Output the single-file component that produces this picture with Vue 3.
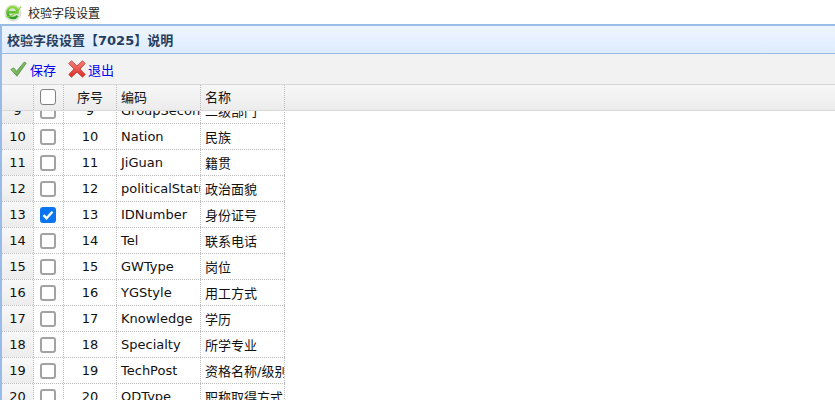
<script setup>
const rows = [
  [9, 'GroupSecond', '二级部门'],
  [10, 'Nation', '民族'],
  [11, 'JiGuan', '籍贯'],
  [12, 'politicalStatus', '政治面貌'],
  [13, 'IDNumber', '身份证号', true],
  [14, 'Tel', '联系电话'],
  [15, 'GWType', '岗位'],
  [16, 'YGStyle', '用工方式'],
  [17, 'Knowledge', '学历'],
  [18, 'Specialty', '所学专业'],
  [19, 'TechPost', '资格名称/级别'],
  [20, 'QDType', '职称取得方式'],
]
</script>

<template>
  <div class="page">
    <div class="titlebar">
      <svg class="logo" width="19" height="19" viewBox="0 0 19 19">
        <defs>
          <linearGradient id="eg" x1="0" y1="0" x2="0" y2="1">
            <stop offset="0" stop-color="#8fdc3c" />
            <stop offset="1" stop-color="#2f9e2a" />
          </linearGradient>
        </defs>
        <circle cx="9" cy="10" r="8.500" fill="#dce3d6" />
        <path d="M4.800 9.200h8.600c.1-3-2-5.200-4.700-5.200-3 0-5.200 2.400-5.200 5.400 0 3.200 2.200 5.600 5.300 5.600 2 0 3.600-.7 4.700-2.200" fill="none" stroke="url(#eg)" stroke-width="2.600" />
        <path d="M2 13.500C6 15 13 10 17 3.500" fill="none" stroke="#7fd034" stroke-width="1.200" />
      </svg>
      <span>校验字段设置</span>
    </div>
    <div class="panel">
      <div class="panel-head">校验字段设置【7025】说明</div>
      <div class="toolbar">
        <a class="tool">
          <svg width="17" height="18" viewBox="0 0 17 18">
            <defs>
              <linearGradient id="ck" x1="0" y1="0" x2="1" y2="1">
                <stop offset="0" stop-color="#a6dc78" />
                <stop offset="1" stop-color="#4f9a3e" />
              </linearGradient>
            </defs>
            <path d="M.8 9.500l2.900-1.700 2.700 3.500L14.300 2l1.900 1.200L7 16.200z" fill="url(#ck)" stroke="#5a8f52" stroke-width=".8" stroke-linejoin="round" />
          </svg>
          <span>保存</span>
        </a>
        <a class="tool">
          <svg width="18" height="18" viewBox="0 0 18 18">
            <defs>
              <linearGradient id="xk" x1="0" y1="0" x2="0" y2="1">
                <stop offset="0" stop-color="#f7857a" />
                <stop offset="1" stop-color="#dc2a26" />
              </linearGradient>
            </defs>
            <path d="M.8 3.500L3.500.8 9 6 14.500.8l2.700 2.700L12 9l5.200 5.500-2.700 2.700L9 12l-5.500 5.200-2.700-2.700L6 9z" fill="url(#xk)" stroke="#b9322e" stroke-width=".8" stroke-linejoin="round" />
          </svg>
          <span>退出</span>
        </a>
      </div>
      <div class="grid-head">
        <div class="cell num-col"></div>
        <div class="cell check-col"><span class="box"></span></div>
        <div class="cell seq-col">序号</div>
        <div class="cell code-col">编码</div>
        <div class="cell name-col">名称</div>
      </div>
      <div class="grid-body">
        <div class="rows">
          <div v-for="r in rows" :key="r[0]" class="row">
            <div class="cell num-col rownum">{{ r[0] }}</div>
            <div class="cell check-col">
              <span class="box" :class="{ checked: r[3] }">
                <svg v-if="r[3]" width="16" height="16" viewBox="0 0 16 16"><path d="M3.500 8.200l3 3 6-6.400" fill="none" stroke="#fff" stroke-width="2.400" /></svg>
              </span>
            </div>
            <div class="cell seq-col">{{ r[0] }}</div>
            <div class="cell code-col">{{ r[1] }}</div>
            <div class="cell name-col">{{ r[2] }}</div>
          </div>
        </div>
      </div>
    </div>
  </div>
</template>

<style>
html, body { margin: 0; background: #fff; overflow: hidden; }
</style>

<style scoped>
.page {
  width: 835px;
  height: 400px;
  overflow: hidden;
  display: flex;
  flex-direction: column;
  font-family: "DejaVu Sans", "Noto Sans CJK SC", sans-serif;
  font-size: 13px;
  color: #111;
}
.titlebar {
  height: 24px;
  flex: none;
  display: flex;
  align-items: center;
  gap: 5px;
  padding-left: 4px;
  font-size: 12px;
  color: #222;
}
.panel {
  flex: 1;
  min-height: 0;
  display: flex;
  flex-direction: column;
  border-left: 2px solid #99bbe8;
  border-top: 2px solid #99bbe8;
}
.panel-head {
  height: 28px;
  flex: none;
  box-sizing: border-box;
  display: flex;
  align-items: center;
  padding-left: 5px;
  font-weight: bold;
  font-size: 13px;
  color: #273d5c;
  background: linear-gradient(#eef5ff, #dfecfe);
  border-bottom: 1px solid #99bbe8;
}
.toolbar {
  height: 31px;
  flex: none;
  box-sizing: border-box;
  display: flex;
  align-items: center;
  gap: 12px;
  padding-left: 8px;
  background: #f2f2f2;
  border-bottom: 1px solid #d8d8d8;
}
.tool {
  display: flex;
  align-items: center;
  gap: 3px;
  color: #0000ee;
}
.tool:last-child { gap: 2px; }
.grid-head {
  height: 26px;
  flex: none;
  box-sizing: border-box;
  display: flex;
  background: linear-gradient(#f7f7f7, #ececec);
  border-bottom: 1px solid #d8d8d8;
}
.grid-head .cell { padding-bottom: 2px; }
.grid-body { flex: 1; min-height: 0; overflow: hidden; }
.rows { margin-top: -13px; }
.row {
  height: 26px;
  box-sizing: border-box;
  display: flex;
  border-bottom: 1px dotted #bbb;
  width: 283px;
}
.cell {
  box-sizing: border-box;
  display: flex;
  align-items: center;
  border-right: 1px dotted #bbb;
  white-space: nowrap;
  overflow: hidden;
}
.num-col { width: 32px; justify-content: center; }
.check-col { width: 30px; justify-content: center; padding-right: 1px; }
.seq-col { width: 53px; justify-content: center; }
.code-col { width: 84px; padding-left: 4px; }
.name-col { width: 84px; padding-left: 4px; }
.rownum { background: linear-gradient(#f8f8f8, #ececec); }
.box {
  width: 16px;
  height: 16px;
  box-sizing: border-box;
  border: 2px solid #a2a2a2;
  border-radius: 3px;
  background: #fff;
  display: block;
  position: relative;
}
.grid-head .box { border-color: #808080; border-width: 1px; }
.box svg { position: absolute; left: -2px; top: -2px; }
.box.checked { background: #0a75f0; border-color: #0a75f0; }
</style>
